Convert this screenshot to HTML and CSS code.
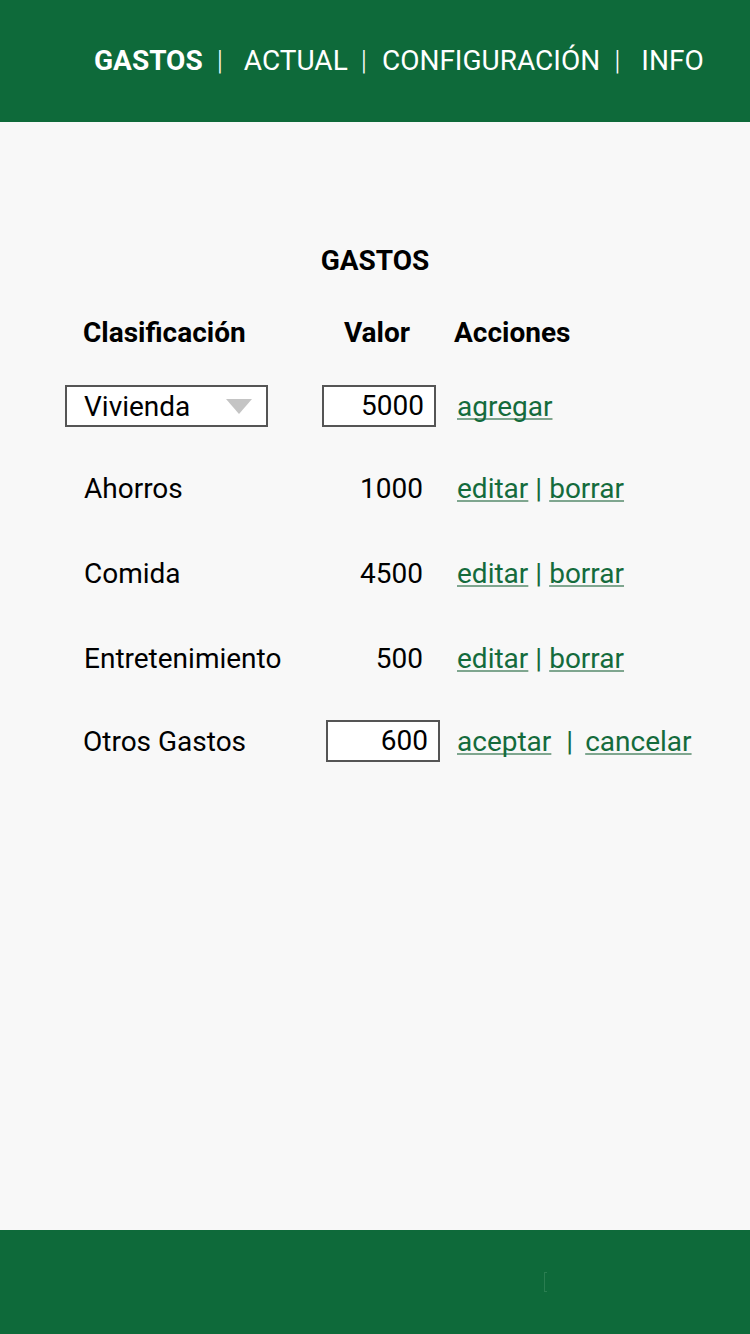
FILE: index.html
```html
<!DOCTYPE html>
<html lang="es">
<head>
<meta charset="utf-8">
<title>Gastos</title>
<link rel="stylesheet" href="styles.css">
</head>
<body>
<div class="page">
  <header class="topbar">
    <nav class="nav">
      <span class="nav-item active">GASTOS</span>
      <span class="nav-sep s1">|</span>
      <span class="nav-item">ACTUAL</span>
      <span class="nav-sep s2">|</span>
      <span class="nav-item">CONFIGURACIÓN</span>
      <span class="nav-sep s3">|</span>
      <span class="nav-item">INFO</span>
    </nav>
  </header>
  <main class="content">
    <h1 class="title">GASTOS</h1>
    <div class="table">
      <div class="cell head c1">Clasificación</div>
      <div class="cell head c2">Valor</div>
      <div class="cell head c3">Acciones</div>

      <div class="cell"><div class="select"><span>Vivienda</span><span class="tri"></span></div></div>
      <div class="cell c2"><div class="input">5000</div></div>
      <div class="cell c3"><a class="link">agregar</a></div>

      <div class="cell name">Ahorros</div>
      <div class="cell val">1000</div>
      <div class="cell c3"><a class="link">editar</a><span class="bar">|</span><a class="link">borrar</a></div>

      <div class="cell name">Comida</div>
      <div class="cell val">4500</div>
      <div class="cell c3"><a class="link">editar</a><span class="bar">|</span><a class="link">borrar</a></div>

      <div class="cell name">Entretenimiento</div>
      <div class="cell val">500</div>
      <div class="cell c3"><a class="link">editar</a><span class="bar">|</span><a class="link">borrar</a></div>

      <div class="cell name alt">Otros Gastos</div>
      <div class="cell c2 shift"><div class="input">600</div></div>
      <div class="cell c3"><a class="link">aceptar</a><span class="bar wide">|</span><a class="link">cancelar</a></div>
    </div>
  </main>
  <footer class="bottombar"><span class="mark"></span></footer>
</div>
</body>
</html>
```
FILE: styles.css
```css
* { box-sizing: border-box; }
html, body { margin: 0; padding: 0; }
body {
  font-family: Roboto, "Liberation Sans", sans-serif;
  background: #f8f8f8;
  color: #000;
}
.page {
  width: 750px;
  height: 1334px;
  display: flex;
  flex-direction: column;
}
.topbar {
  height: 122px;
  background: #0e6a3a;
  display: flex;
  align-items: center;
  flex-shrink: 0;
}
.nav {
  display: flex;
  align-items: center;
  padding-left: 94px;
  color: #fff;
  font-size: 28px;
  line-height: 34px;
}
.nav-item { white-space: nowrap; }
.nav-item.active { font-weight: 700; }
.nav-sep { font-weight: 300; }
.s1 { margin: 0 21px 0 14px; }
.s2 { margin: 0 15px 0 13px; }
.s3 { margin: 0 21px 0 14px; }

.content {
  flex: 1;
  padding-top: 119px;
}
.title {
  margin: 0;
  text-align: center;
  font-size: 28px;
  font-weight: 700;
  line-height: 40px;
}
.table {
  margin-top: 17px;
  margin-left: 65px;
  display: grid;
  grid-template-columns: 240px 118px 1fr;
  grid-template-rows: 68px 80px 84px 86px 84px 82px;
  column-gap: 17px;
  align-items: center;
  font-size: 28px;
}
.cell { white-space: nowrap; }
.head { font-weight: 700; }
.c1 { padding-left: 18px; }
.head.c2 { text-align: center; padding-right: 8px; }
.head.c3 { margin-left: -3px; }
.name { padding-left: 19px; }
.name.alt { padding-left: 18px; }
.val { text-align: right; padding-right: 17px; }
.shift { padding-left: 4px; }
.select {
  width: 203px;
  height: 42px;
  border: 2px solid #555;
  background: #fff;
  display: flex;
  align-items: center;
  justify-content: space-between;
  padding: 0 14px 0 17px;
}
.tri {
  width: 0; height: 0;
  border-left: 13px solid transparent;
  border-right: 13px solid transparent;
  border-top: 15px solid #c4c4c4;
}
.input {
  width: 114px;
  height: 42px;
  border: 2px solid #555;
  background: #fff;
  text-align: right;
  padding-right: 10px;
  line-height: 38px;
}
.link {
  color: #146b3c;
  text-decoration: underline;
  text-decoration-color: #7fa68f;
  text-decoration-skip-ink: none;
  text-underline-offset: 2px;
}
.bar { color: #146b3c; margin: 0 7px; }
.bar.wide { margin: 0 12px 0 15px; }
.bottombar {
  height: 104px;
  background: #0e6a3a;
  flex-shrink: 0;
  position: relative;
}
.mark {
  position: absolute;
  left: 544px;
  top: 42px;
  width: 3px;
  height: 20px;
  border-left: 1px solid #3c8a5f;
  border-top: 1px solid #3c8a5f;
  border-bottom: 1px solid #3c8a5f;
  opacity: 0.6;
}
```
